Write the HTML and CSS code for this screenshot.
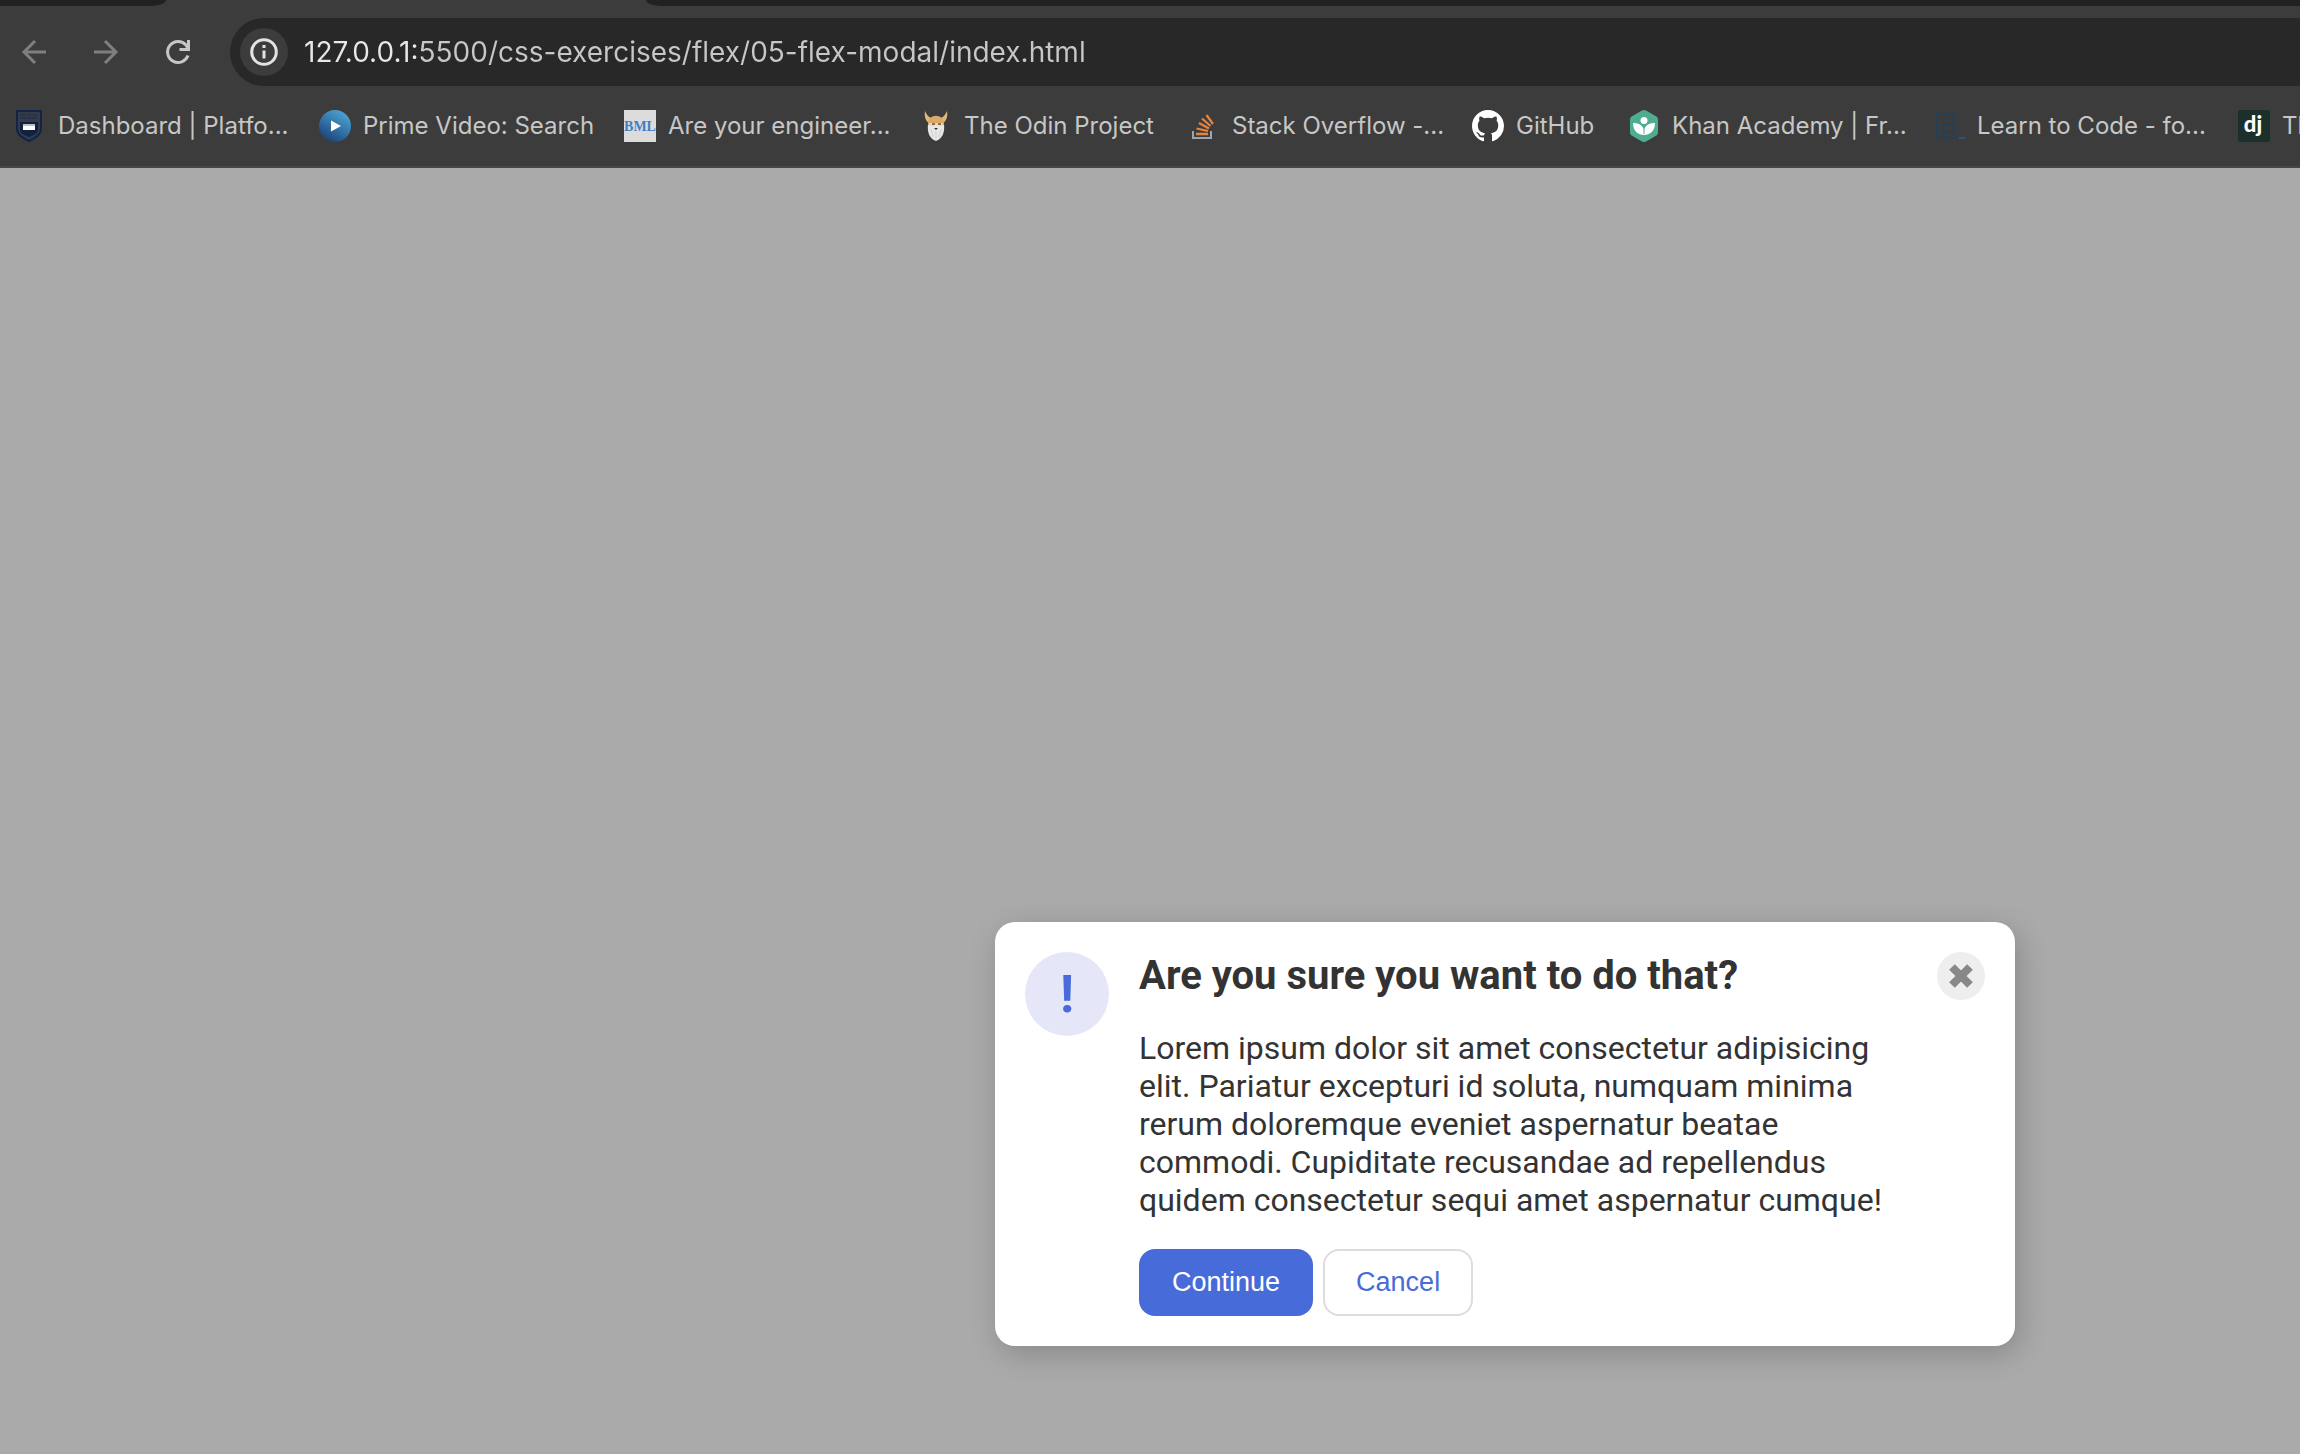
FILE: index.html
```html
<!DOCTYPE html>
<html lang="en">
<head>
<meta charset="utf-8">
<title>Modal</title>
<link rel="stylesheet" href="styles.css">
</head>
<body>
<header class="browser">
  <div class="tabs"><div class="tab tab-before"></div><div class="tab tab-after"></div></div>
  <div class="toolbar">
    <nav class="history" aria-label="History">
      <button class="tool muted" aria-label="Back"><svg viewBox="0 0 24 24"><path d="M24 12H2M13 1 2 12l11 11"/></svg></button>
      <button class="tool muted" aria-label="Forward"><svg viewBox="0 0 24 24"><path d="M0 12h22M11 1l11 11-11 11"/></svg></button>
      <button class="tool" aria-label="Reload"><svg viewBox="0 0 24 24"><path d="M22 15.500A10.500 10.500 0 1 1 20 5l2 3.500M22.500 0v9.500H13.500"/></svg></button>
    </nav>
    <div class="address">
      <button class="site-info" aria-label="Site information"><svg viewBox="0 0 28 28"><circle cx="14" cy="14" r="12.300"/><path d="M14 12.500v8M14 7v3"/></svg></button>
      <input class="url" type="text" aria-label="Address" value="127.0.0.1:5500/css-exercises/flex/05-flex-modal/index.html">
    </div>
  </div>
  <nav class="bookmarks" aria-label="Bookmarks">
    <a class="bookmark wide" href="#"><svg viewBox="0 0 32 32"><path d="M3 1h24v18c0 6-6 9-12 12C9 28 3 25 3 19z" fill="#343b48" stroke="#142447" stroke-width="2"/><path d="M7 5h4M13 5h4M19 5h4M7 8h16" stroke="#1f2d49" stroke-width="1"/><path d="M6 12h18v8c0 3-4 5-9 7-5-2-9-4-9-7z" fill="#12213f"/><path d="M9 14h12v6H9z" fill="#fff"/><path d="M9 14h12v2H9z" fill="#b9bfca"/></svg><span>Dashboard | Platfo...</span></a>
    <a class="bookmark wide" href="#"><svg viewBox="0 0 32 32"><defs><linearGradient id="prime" x1=".2" y1="1" x2=".8" y2="0"><stop stop-color="#1b3d73"/><stop offset="1" stop-color="#4da9da"/></linearGradient></defs><circle cx="16" cy="16" r="16" fill="url(#prime)"/><path d="M12 10.500v11L22 16z" fill="#fff"/></svg><span>Prime Video: Search</span></a>
    <a class="bookmark medium" href="#"><svg viewBox="0 0 32 32"><path d="M0 0h32v32H0z" fill="#dcdcdc"/><text x="16" y="21" class="bml">BML</text></svg><span>Are your engineer...</span></a>
    <a class="bookmark short" href="#"><svg viewBox="0 0 32 32"><path d="M5 1c-1 7 1 10 5 13l2-6C9 8 7 5 5 1zM27 1c1 7-1 10-5 13l-2-6c3 0 5-3 7-7z" fill="#e0b878"/><path d="M8 14C8 3 24 3 24 14z" fill="#dba968"/><path d="M9 13h14v7H9z" fill="#efd2bd"/><path d="M8 14c2 2 4 3 5 2 2-1 4-1 6 0 1 1 3 0 5-2 1 9-2 15-8 17C10 29 7 23 8 14z" fill="#e8e8e8"/><path d="m11 19 2 8M21 19l-2 8M16 21v8" stroke="#cfcfcf" fill="none"/><path d="M12 14h3M18 14h3" stroke="#947047" stroke-width="2"/><path d="M14 18h4l-2 2z" fill="#333"/></svg><span>The Odin Project</span></a>
    <a class="bookmark overflow" href="#"><svg viewBox="0 0 32 32" fill="none"><path d="M5 21v7h18v-7" stroke="#9ca4b1" stroke-width="2"/><path d="M8 24h12M8.500 18.500 20 21M11 13l10 5.500M14 8.500l8.500 7.500M18.500 5l6.500 9" stroke="#e88439" stroke-width="2.300"/></svg><span>Stack Overflow -...</span></a>
    <a class="bookmark compact" href="#"><svg viewBox="0 0 16 16"><path fill="#fff" d="M8 0C3.580 0 0 3.580 0 8c0 3.540 2.290 6.530 5.470 7.590.4.070.55-.17.55-.38 0-.19-.01-.82-.01-1.490-2.010.37-2.530-.49-2.690-.94-.09-.23-.48-.94-.82-1.130-.28-.15-.68-.52-.01-.53.63-.01 1.080.58 1.230.82.72 1.210 1.870.87 2.330.66.07-.52.28-.87.51-1.070-1.780-.2-3.640-.89-3.640-3.950 0-.87.31-1.590.82-2.150-.08-.2-.36-1.020.08-2.120 0 0 .67-.21 2.200.82.64-.18 1.320-.27 2-.27.68 0 1.360.09 2 .27 1.530-1.040 2.200-.82 2.200-.82.44 1.100.16 1.920.08 2.120.51.56.82 1.270.82 2.150 0 3.070-1.870 3.750-3.650 3.950.29.25.54.73.54 1.480 0 1.070-.01 1.930-.01 2.200 0 .21.15.46.55.38A8.013 8.013 0 0 0 16 8c0-4.420-3.580-8-8-8z"/></svg><span>GitHub</span></a>
    <a class="bookmark wide" href="#"><svg viewBox="0 0 32 32"><path d="M14 .5q2-1 4 0l10 5.700q2 1 2 3v13.600q0 2-2 3l-10 5.700q-2 1-4 0L4 25.800q-2-1-2-3V9.200q0-2 2-3z" fill="#4fac91"/><circle cx="16" cy="10.500" r="3.500" fill="#fff"/><path d="M5 13c6-.5 10 3 11 7 1-4 5-7.500 11-7 0 8-5 12-11 12S5 21 5 13z" fill="#fff"/><path d="M16 19v5" stroke="#4fac91"/></svg><span>Khan Academy | Fr...</span></a>
    <a class="bookmark wide" href="#"><svg viewBox="0 0 32 32" fill="none"><path d="M4 4.500h17v23H4z" stroke="#23405a" stroke-width="2"/><path d="M16 15c-5-3-7 0-7 3s2 6 7 3" stroke="#23405a" stroke-width="2.500"/><path d="M26 28h6" stroke="#29567e" stroke-width="2"/></svg><span>Learn to Code - fo...</span></a>
    <a class="bookmark" href="#"><svg viewBox="0 0 32 32"><rect width="32" height="32" rx="2" fill="#1b302a"/><text x="15" y="22" class="dj">dj</text></svg><span>The web framework</span></a>
  </nav>
</header>
<main class="page">
  <section class="modal" role="dialog" aria-labelledby="modal-title">
    <div class="alert-icon">!</div>
    <div class="content">
      <h1 id="modal-title">Are you sure you want to do that?</h1>
      <p>Lorem ipsum dolor sit amet consectetur adipisicing elit. Pariatur excepturi id soluta, numquam minima rerum doloremque eveniet aspernatur beatae commodi. Cupiditate recusandae ad repellendus quidem consectetur sequi amet aspernatur cumque!</p>
      <div class="actions"><button class="action primary">Continue</button><button class="action">Cancel</button></div>
    </div>
    <button class="close" aria-label="Close"><svg viewBox="0 0 24 24"><path d="m3 3 18 18M21 3 3 21"/></svg></button>
  </section>
</main>
</body>
</html>
```
FILE: styles.css
```css
* { box-sizing: border-box; }

body {
  margin: 0;
  min-height: 100vh;
  display: flex;
  flex-direction: column;
  background: #aaa;
  color: #333;
  font-family: Roboto, sans-serif;
  overflow-x: hidden;
}

button {
  border: 0;
  padding: 0;
  background: none;
}

/* Browser chrome */
.browser {
  background: #3c3c3c;
  border-bottom: 2px solid #474747;
  font-family: Inter, sans-serif;
  overflow: hidden;
}

.tabs {
  display: flex;
  gap: 480px;
  height: 6px;
}

.tab { background: #1f2221; }
.tab-before { width: 166px; border-bottom-right-radius: 16px 6px; }
.tab-after { flex: 1; border-bottom-left-radius: 16px 6px; }

.toolbar {
  display: flex;
  align-items: center;
  gap: 40px;
  padding: 12px 0 0 22px;
}

.history {
  display: flex;
  gap: 48px;
}

.tool {
  width: 24px;
  height: 24px;
  color: #c7c7c7;
}

.tool svg {
  display: block;
  overflow: visible;
  fill: none;
  stroke: currentColor;
  stroke-width: 3;
}

.muted { color: #7f7f7f; }

.address {
  flex: 1;
  display: flex;
  align-items: center;
  gap: 16px;
  height: 68px;
  padding-left: 10px;
  border-radius: 34px 0 0 34px;
  background: #282828;
}

.site-info {
  display: grid;
  place-items: center;
  width: 48px;
  height: 48px;
  border-radius: 50%;
  background: #3c3c3c;
}

.site-info svg {
  width: 28px;
  height: 28px;
  fill: none;
  stroke: #e3e3e3;
  stroke-width: 3;
}

.url {
  flex: 1;
  border: 0;
  padding: 0;
  outline: 0;
  font: 28px/36px Inter, sans-serif;
  color: #c7c7c7;
  background: linear-gradient(90deg, #e8e8e8 118px, #c7c7c7 118px);
  background-clip: text;
  -webkit-text-fill-color: transparent;
}

.bookmarks {
  display: flex;
  height: 80px;
  padding-left: 14px;
}

.bookmark {
  flex: none;
  display: flex;
  align-items: center;
  gap: 12px;
  color: #c7c7c7;
  font-size: 24px;
  line-height: 32px;
  text-decoration: none;
  white-space: nowrap;
}

.bookmark svg {
  flex: none;
  width: 32px;
  height: 32px;
}

.wide { width: 305px; }
.medium { width: 296px; }
.short { width: 268px; }
.overflow { width: 284px; }
.compact { width: 156px; }

.bml {
  font: bold 14px "Liberation Serif", serif;
  fill: #3f7fc4;
  text-anchor: middle;
}

.dj {
  font: 900 22px Lato, sans-serif;
  fill: #fff;
  text-anchor: middle;
}

/* Page and dialog */
.page {
  flex: 1;
  display: flex;
  justify-content: flex-end;
  align-items: flex-end;
  padding: 0 285px 108px 0;
}

.modal {
  display: flex;
  align-items: flex-start;
  gap: 30px;
  width: 1020px;
  padding: 30px;
  border-radius: 20px;
  background: #fff;
  box-shadow: 4px 8px 30px rgba(0, 0, 0, .2);
}

.alert-icon {
  flex: none;
  display: grid;
  place-items: center;
  width: 84px;
  height: 84px;
  border-radius: 50%;
  background: #e6e6f9;
  color: #486bda;
  font-size: 52px;
  font-weight: 700;
}

.content {
  flex: 1;
  display: flex;
  flex-direction: column;
  gap: 30px;
}

h1 {
  margin: 0;
  font-size: 40px;
  line-height: 47px;
}

p {
  margin: 0;
  font-size: 32px;
  line-height: 38px;
}

.actions {
  display: flex;
  gap: 10px;
}

.action {
  height: 67px;
  padding: 0 31px;
  border: 2px solid #ddd;
  border-radius: 16px;
  color: #486bda;
  font: 27px "Liberation Sans", Arial, sans-serif;
}

.primary {
  border-color: #486bda;
  background: #486bda;
  color: #fff;
}

.close {
  flex: none;
  display: grid;
  place-items: center;
  width: 48px;
  height: 48px;
  border-radius: 50%;
  background: #eee;
}

.close svg {
  width: 24px;
  height: 24px;
  stroke: #888;
  stroke-width: 8;
}
```
